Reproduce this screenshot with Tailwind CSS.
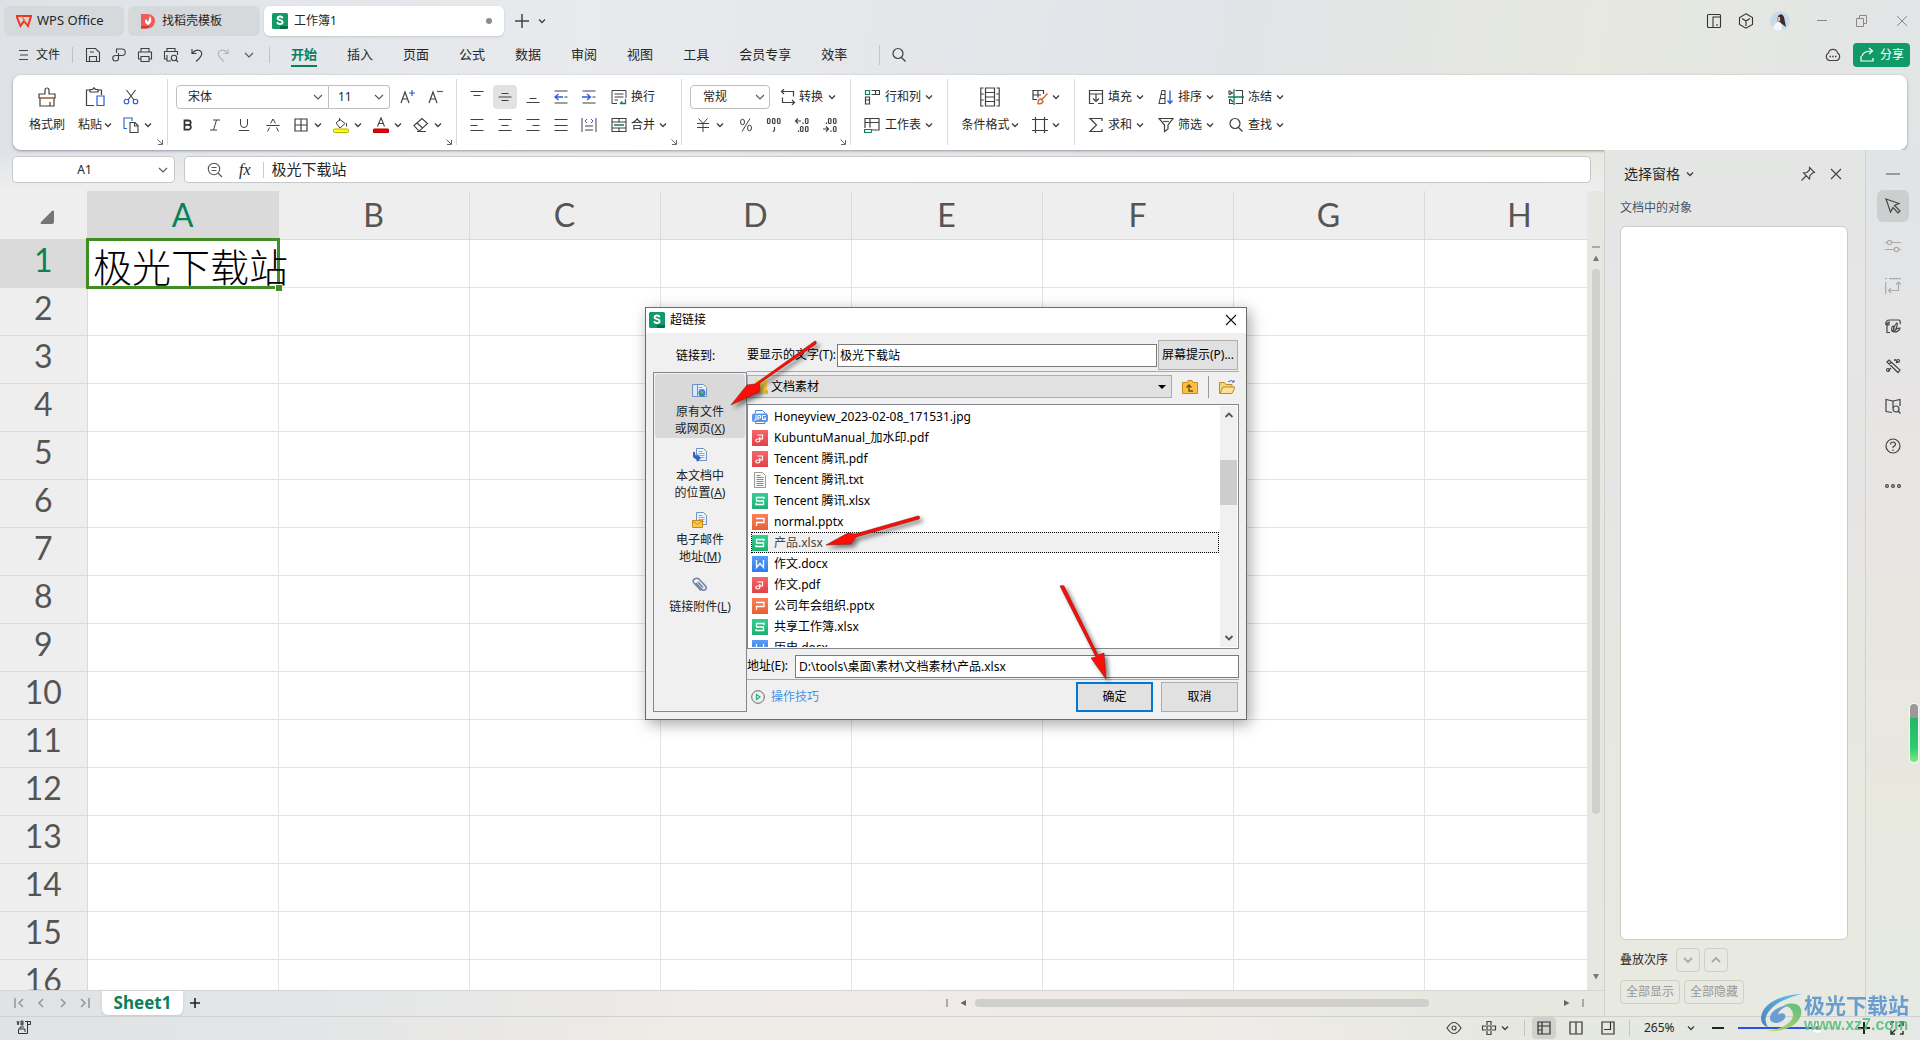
<!DOCTYPE html>
<html lang="zh-CN">
<head>
<meta charset="utf-8">
<meta name="viewport" content="width=device-width, initial-scale=1">
<title>工作簿1 - WPS Office</title>
<script src="https://cdn.jsdelivr.net/npm/@tailwindcss/browser@4"></script>
</head>
<body class="h-screen overflow-hidden flex flex-col font-['Noto_Sans','Noto_Sans_CJK_SC',sans-serif] text-xs text-[#262626] bg-[linear-gradient(100deg,#dee2e7_0%,#e8eaed_28%,#e1e4e8_58%,#e7e8e0_76%,#e2e5e6_92%,#e0e4e8_100%)]">

<!-- icon sprite -->
<svg class="absolute size-0" aria-hidden="true">
  <defs>
    <linearGradient id="gRed" x1="0" y1="0" x2="0" y2="1"><stop offset="0" stop-color="#f5666b"/><stop offset="1" stop-color="#e04348"/></linearGradient>
    <linearGradient id="gGreen" x1="0" y1="0" x2="0" y2="1"><stop offset="0" stop-color="#35cf92"/><stop offset="1" stop-color="#1daf72"/></linearGradient>
    <linearGradient id="gOrange" x1="0" y1="0" x2="0" y2="1"><stop offset="0" stop-color="#f98055"/><stop offset="1" stop-color="#e5603a"/></linearGradient>
    <linearGradient id="gBlue" x1="0" y1="0" x2="0" y2="1"><stop offset="0" stop-color="#5a9cf5"/><stop offset="1" stop-color="#2f7be8"/></linearGradient>
    <symbol id="chev" viewBox="0 0 8 8"><path d="M1 2.5l3 3 3-3" fill="none" stroke="#404040" stroke-width="1.4"/></symbol>
    <symbol id="chevL" viewBox="0 0 10 10"><path d="M1 3l4 4 4-4" fill="none" stroke="#555" stroke-width="1.1"/></symbol>
    <symbol id="launch" viewBox="0 0 6 6"><path d="M.5.5l4.500 4.500M5.500 1v4.500H1" fill="none" stroke="#666"/></symbol>
    <symbol id="s" viewBox="0 0 16 16"><rect width="16" height="16" rx="1.5" fill="#109a67"/><path d="M8 13h8v1.500q0 1.500-1.500 1.500H8z" fill="#0a6a45"/><path d="M10.600 5.200Q10.200 3.500 8 3.500T5.500 5.300Q5.500 6.700 8 7.200T10.600 9.200Q10.500 11 8 11T5.200 9.200" fill="none" stroke="#fff" stroke-width="1.800"/></symbol>
    <symbol id="pdf" viewBox="0 0 16 16"><rect width="16" height="16" fill="url(#gRed)"/><path d="M5.500 5h5v4H5.800q-2 0-2 1.500t2 1.500 2-1.500V7" fill="none" stroke="#fff" stroke-width="1.200"/></symbol>
    <symbol id="xls" viewBox="0 0 16 16"><rect width="16" height="16" fill="url(#gGreen)"/><path d="M12 6V4.500H4.500V8h7v3.500H4V10" fill="none" stroke="#fff" stroke-width="1.300"/></symbol>
    <symbol id="ppt" viewBox="0 0 16 16"><rect width="16" height="16" fill="url(#gOrange)"/><path d="M4 4.500h8v4H4.500V12" fill="none" stroke="#fff" stroke-width="1.300"/></symbol>
    <symbol id="doc" viewBox="0 0 16 16"><rect width="16" height="16" fill="url(#gBlue)"/><path d="M4.500 4v7.500L8 7.500l3.500 4V4" fill="none" stroke="#fff" stroke-width="1.300"/></symbol>
    <symbol id="txt" viewBox="0 0 16 16"><path d="M2.500.5h8l3 3v12h-11z" fill="#fafafa" stroke="#999"/><path d="M4.500 3.500h4m-4 2h7m-7 2h7m-7 2h7m-7 2h7m-7 2h7" stroke="#888"/></symbol>
    <symbol id="jpg" viewBox="0 0 16 16"><path d="M3.500 4V1.500h7L13 4v1m-9.500 8v1.500H13V13" fill="none" stroke="#4a86dc"/><rect y="4.500" width="16" height="8.500" rx="2" fill="#5a94e6"/><path d="M4 6v5H2m4 0V6.500h2.500v2.500H6m7.500-2.500h-3v4h3V9H12" fill="none" stroke="#fff"/></symbol>
    <symbol id="page" viewBox="0 0 16 16"><path d="M4.500.5h7l3 3v9h-10z" fill="#eef5ff" stroke="#6d8fc4"/><path d="M6.500 3.500h4m-4 2h6m-6 2h6m-6 2h6" stroke="#84a7dd"/></symbol>
    <symbol id="mag" viewBox="0 0 16 16"><circle cx="7" cy="6.500" r="5" fill="none" stroke="currentColor" stroke-width="1.200"/><path d="M10.500 10.500l4 4" stroke="currentColor" stroke-width="1.200"/></symbol>
  </defs>
</svg>

<!-- title bar -->
<header class="flex items-center h-9 mt-[3px] shrink-0 pl-1 pr-[10px] text-[13px]">
  <button class="flex items-center gap-[5px] w-30 h-[30px] rounded-md bg-[#d5d9dc] pl-3 mr-1 whitespace-nowrap">
    <svg class="size-4 shrink-0" viewBox="0 0 16 16"><path d="M.5 3h14.500l-3 10-4-5-3.500 5z" fill="none" stroke="#ee3524" stroke-width="2"/><path d="M6 3l3 6" stroke="#f6722e" stroke-width="1.500"/></svg>
    <span>WPS Office</span>
  </button>
  <button class="flex items-center gap-[6px] w-33 h-[30px] rounded-md bg-[#d5d9dc] pl-3 mr-1 text-xs">
    <svg class="size-4" viewBox="0 0 16 16"><path d="M1 1h6c5 0 8 3 8 7s-3 7.500-8 7.500H1z" fill="#ef5b5b"/><path d="M1 13h9l-3 2.500H1z" fill="#d33a3a"/><path d="M8 12C4 10 5 7 6 6l2 3 2-6c2 3 2 7-2 9z" fill="#fff"/></svg>
    找稻壳模板
  </button>
  <button class="flex items-center gap-[6px] w-60 h-[30px] rounded-md bg-white pl-2 pr-3 shadow text-xs">
    <svg class="size-4"><use href="#s"/></svg><span>工作簿1</span><span class="ml-auto size-[6px] rounded-full bg-[#8c8c8c]"></span>
  </button>
  <button class="flex items-center gap-2 ml-[10px]" aria-label="新建">
    <svg class="size-4" viewBox="0 0 16 16"><path d="M8 1v14M1 8h14" stroke="#444" stroke-width="1.500"/></svg>
    <svg class="size-2"><use href="#chev"/></svg>
  </button>
  <div class="ml-auto flex items-center gap-4">
    <svg class="size-4" viewBox="0 0 16 16" fill="none" stroke="#333" stroke-width="1.100"><rect x="1.500" y="1.500" width="13" height="13" rx="1"/><path d="M7 14.500V4h7.500M10 12h2"/></svg>
    <svg class="size-4" viewBox="0 0 16 16" fill="none" stroke="#333" stroke-width="1.100"><path d="M8 .8l6.500 3.700v7L8 15.200l-6.500-3.700v-7zM4 5.500L8 8l4-2.500M8 8v5"/></svg>
    <svg class="size-5" viewBox="0 0 20 20"><circle cx="10" cy="10" r="10" fill="#c9dbe6"/><path d="M8 5q4-4 6 1l2 10-4-3-5-3z" fill="#3b2a30"/><path d="M8 6q3-1 2 4l-3 1z" fill="#e8bda8"/><path d="M3 17q4-9 8-5l1 7q-5 2-9-2z" fill="#f3f7fa"/></svg>
  </div>
  <div class="flex items-center gap-6 ml-6">
    <button aria-label="最小化"><svg class="size-4" viewBox="0 0 16 16"><path d="M3 7.500h10" stroke="#888"/></svg></button>
    <button aria-label="还原"><svg class="size-4" viewBox="0 0 16 16" fill="none" stroke="#888"><path d="M2.500 5.500h7v8h-7zM5.500 5V2.500h7v8H10"/></svg></button>
    <button aria-label="关闭"><svg class="size-4" viewBox="0 0 16 16"><path d="M3 3l10 10M13 3L3 13" stroke="#888"/></svg></button>
  </div>
</header>

<!-- menu -->
<nav class="flex items-center h-8 mb-1 shrink-0 pl-[18px] pr-[10px] text-[13px]">
  <button class="flex items-center gap-[7px]"><svg class="w-[11px] h-3" viewBox="0 0 11 12"><path d="M1 1.500h9M2 6h8M1 10.500h9" stroke="#444"/></svg><span class="text-xs">文件</span></button>
  <span class="w-px h-4 bg-[#bfc3c6] ml-[12px] mr-[12px]"></span>
  <div class="flex items-center gap-[10px] text-[#404040]">
    <svg class="size-4" viewBox="0 0 16 16" fill="none" stroke="currentColor" stroke-width="1.100"><path d="M1.500 1.500h9l4 4v9h-13zM4.500 14V9.500h7V14M5 5h4"/></svg>
    <svg class="size-4" viewBox="0 0 16 16" fill="none" stroke="currentColor" stroke-width="1.100"><path d="M5.500 6V2h5.500a3 3 0 010 6.500H4.500a2.700 2.700 0 100 5.500c2 0 3-1 3-2.500V6"/></svg>
    <svg class="size-4" viewBox="0 0 16 16" fill="none" stroke="currentColor" stroke-width="1.100"><path d="M4 5V1.500h8V5M4 12H1.500V5h13v7H12M4 9.500h8v5H4z"/></svg>
    <svg class="size-4" viewBox="0 0 16 16" fill="none" stroke="currentColor" stroke-width="1.100"><path d="M4 4.500V1.500h8v3M3.500 12H1.500V4.500h13V8M4 8v6h4"/><circle cx="11" cy="11" r="2.700"/><path d="M13 13l2 2"/></svg>
    <svg class="size-4" viewBox="0 0 16 16" fill="none" stroke="currentColor" stroke-width="1.200"><path d="M3 2v4.500h4.500M3.500 6C8 .5 15 4 12 9c-1 2-3 4-5 5.500"/></svg>
    <svg class="size-4 text-[#b8b8b8]" viewBox="0 0 16 16" fill="none" stroke="currentColor" stroke-width="1.200"><path d="M13 2v4.500H8.500M12.500 6C8 .5 1 4 4 9c1 2 3 4 5 5.500"/></svg>
    <svg class="size-[10px] ml-[3px]"><use href="#chevL"/></svg>
  </div>
  <span class="w-px h-4 bg-[#bfc3c6] mx-[15px]"></span>
  <div class="flex items-center gap-[30px] ml-[6px]">
    <a href="#" class="relative font-bold text-[#0a7f58] after:absolute after:inset-x-0 after:-bottom-[3px] after:h-[2px] after:bg-[#0a7f58]">开始</a>
    <a href="#">插入</a><a href="#">页面</a><a href="#">公式</a><a href="#">数据</a><a href="#">审阅</a><a href="#">视图</a><a href="#">工具</a><a href="#">会员专享</a><a href="#">效率</a>
  </div>
  <span class="w-px h-5 bg-[#c4c7ca] ml-[32px] mr-[11px]"></span>
  <svg class="size-4 text-[#404040]"><use href="#mag"/></svg>
  <svg class="size-4 ml-auto mr-3" viewBox="0 0 16 16" fill="none" stroke="#444" stroke-width="1.100"><path d="M4.500 13.500a4 4 0 01-1-7.500 4.600 4.600 0 019 0 4 4 0 01-1 7.500z"/><path d="M4.500 9.500h1.500m1.200 0h1.500m1.300 0h1.500" stroke-width="1.600"/></svg>
  <button class="flex items-center gap-[5px] h-6 px-[6px] rounded bg-[#109a67] text-white text-xs"><svg class="size-4" viewBox="0 0 16 16" fill="none" stroke="#fff" stroke-width="1.200"><path d="M2 9v5h12v-3M3 9c1-4 4-5 10-5M10 1l3.500 3L10 7"/></svg>分享</button>
</nav>

<!-- ribbon -->
<section class="flex items-start shrink-0 h-[75px] ml-[13px] mr-[13px] pt-1 rounded-lg bg-white shadow-[0_1px_3px_rgba(0,0,0,0.35)] whitespace-nowrap" aria-label="开始">
  <div class="relative flex w-[155px] h-[66px] border-r border-[#dadada] pl-[11px] pt-1 shrink-0">
    <button class="flex flex-col items-center w-[46px]">
      <span class="h-7 flex items-center"><svg class="size-5" viewBox="0 0 20 20" fill="none" stroke="#404040" stroke-width="1.200"><path d="M8 7V3a2 2 0 014 0v4h6v4H2V7zM3 11v8h14v-8M13 19v-4"/><path d="M3 11h14" stroke="#d5692c"/></svg></span>
      <span class="h-7 flex items-center">格式刷</span>
    </button>
    <button class="flex flex-col items-center w-[50px]">
      <span class="h-7 flex items-center"><svg class="size-5" viewBox="0 0 20 20" fill="none" stroke="#404040" stroke-width="1.200"><path d="M9 18.500H1.500V3H5m8 0h3.500v5M5 5V2.500h2.500L9 .8l1.500 1.700H13V5z"/><path d="M12 9h7v9.500h-7z" stroke="#2a5bd7"/></svg></span>
      <span class="h-7 flex items-center gap-[2px]">粘贴<svg class="size-2"><use href="#chev"/></svg></span>
    </button>
    <div class="flex flex-col pl-[3px]">
      <button class="h-7 flex items-center" aria-label="剪切"><svg class="size-4" viewBox="0 0 16 16" fill="none" stroke="#404040" stroke-width="1.100"><path d="M3.500 1l7.500 10M12.500 1L5 11"/><g stroke="#2a5bd7"><circle cx="3.500" cy="12.500" r="2.300"/><circle cx="12.500" cy="12.500" r="2.300"/></g></svg></button>
      <button class="h-7 flex items-center gap-[5px]" aria-label="复制"><svg class="size-4" viewBox="0 0 16 16" fill="none" stroke="#404040" stroke-width="1.100"><path d="M4 11.500H1V1h8v3" stroke="#2a5bd7"/><path d="M7 5.500h5l3 3v7H7zM11.500 6v3H15"/></svg><svg class="size-2"><use href="#chev"/></svg></button>
    </div>
    <svg class="absolute right-[4px] bottom-0 size-[6px]"><use href="#launch"/></svg>
  </div>

  <div class="relative w-[289px] h-[66px] border-r border-[#dadada] pl-2 pt-1 shrink-0">
    <div class="h-7 flex items-center">
      <label class="relative flex items-center w-[153px] h-6 border border-[#bfbfbf] rounded-l"><select aria-label="字体" class="appearance-none w-full h-full pl-[11px] outline-none"><option>宋体</option></select><svg class="absolute right-[5px] size-[10px] pointer-events-none"><use href="#chevL"/></svg></label>
      <label class="relative flex items-center w-[61px] h-6 border border-l-0 border-[#bfbfbf] rounded-r"><select aria-label="字号" class="appearance-none w-full h-full pl-[9px] outline-none"><option>11</option></select><svg class="absolute right-[5px] size-[10px] pointer-events-none"><use href="#chevL"/></svg></label>
      <button class="w-9 flex justify-center" aria-label="增大字号"><svg class="size-4" viewBox="0 0 16 16" fill="none" stroke="#404040" stroke-width="1.200"><path d="M1 14L5 3l4 11M2.500 10h5"/><path d="M12 1v6M9 4h6" stroke="#2a5bd7"/></svg></button>
      <button class="w-5 flex justify-center" aria-label="减小字号"><svg class="size-4" viewBox="0 0 16 16" fill="none" stroke="#404040" stroke-width="1.200"><path d="M1 14L5 3l4 11M2.500 10h5"/><path d="M9 2.500h6" stroke="#2a5bd7"/></svg></button>
    </div>
    <div class="h-7 flex items-center">
      <button class="w-6 flex justify-center" aria-label="加粗"><svg class="size-3" viewBox="0 0 12 12" fill="none" stroke="#333" stroke-width="1.800"><path d="M2.500 1.500h4a2.200 2.200 0 010 4.400h-4zm0 4.400h4.500a2.400 2.400 0 010 4.700H2.500z"/></svg></button>
      <button class="w-[30px] flex justify-center" aria-label="倾斜"><svg class="size-3" viewBox="0 0 12 12" fill="none" stroke="#404040"><path d="M4 1h7M1 11h7M7.500 1l-3 10"/></svg></button>
      <button class="w-7 flex justify-center" aria-label="下划线"><svg class="size-3" viewBox="0 0 12 12" fill="none" stroke="#404040"><path d="M2.500 0v5a3.500 3.500 0 007 0V0M1 11.500h10"/></svg></button>
      <button class="w-[30px] flex justify-center" aria-label="删除线"><svg class="size-4" viewBox="0 0 16 16" fill="none" stroke="#404040"><path d="M5.500 6.500L8 2l2.500 4.500M1.500 8.500h13M4.500 10.500l-2 4M11.500 10.500l2 4"/></svg></button>
      <button class="w-10 pl-[5px] gap-[5px] flex items-center" aria-label="边框"><svg class="size-4" viewBox="0 0 16 16" fill="none" stroke="#404040" stroke-width="1.200"><path d="M2 2h12v12H2zM8 2v12M2 8h12"/></svg><svg class="size-2"><use href="#chev"/></svg></button>
      <button class="w-10 pl-[5px] gap-[5px] flex items-center" aria-label="填充颜色"><svg class="size-4" viewBox="0 0 16 16" fill="none" stroke="#404040"><path d="M6.500 1v3M3 6l4-3.500 5 4-5 4.500zM13.500 6v3.500"/><rect x=".5" y="12" width="15" height="3.500" rx="1" fill="#ff0" stroke="#b5b500"/></svg><svg class="size-2"><use href="#chev"/></svg></button>
      <button class="w-10 pl-[5px] gap-[5px] flex items-center" aria-label="字体颜色"><svg class="size-4" viewBox="0 0 16 16" fill="none" stroke="#404040" stroke-width="1.100"><path d="M4.500 9.500L8 .8l3.500 8.700M6 6.500h4"/><rect x=".5" y="12" width="15" height="3.500" rx="1" fill="#f00000" stroke="#b80000"/></svg><svg class="size-2"><use href="#chev"/></svg></button>
      <button class="w-10 pl-[5px] gap-[5px] flex items-center" aria-label="清除"><svg class="size-4" viewBox="0 0 16 16" fill="none" stroke="#404040" stroke-width="1.100"><path d="M1 8.500l8-7 5.500 5-7.500 7-2-.5zM4 6l5.500 5M4 14.500h9"/></svg><svg class="size-2"><use href="#chev"/></svg></button>
    </div>
    <svg class="absolute right-[4px] bottom-0 size-[6px]"><use href="#launch"/></svg>
  </div>

  <div class="relative w-[225px] h-[66px] border-r border-[#dadada] pl-[6px] pt-1 shrink-0">
    <div class="h-7 flex items-center">
      <button class="w-7 flex justify-center" aria-label="顶端对齐"><svg class="size-4" viewBox="0 0 16 16" stroke="#404040"><path d="M1.500 2.500h13M4.500 6.500h7"/></svg></button>
      <button class="w-7 flex justify-center" aria-label="垂直居中"><span class="w-6 h-6 rounded bg-[#e2e2e2] flex items-center justify-center"><svg class="size-4" viewBox="0 0 16 16" stroke="#404040"><path d="M4.500 4.500h7M1.500 8h13M4.500 11.500h7"/></svg></span></button>
      <button class="w-7 flex justify-center" aria-label="底端对齐"><svg class="size-4" viewBox="0 0 16 16" stroke="#404040"><path d="M4.500 9.500h7M1.500 13.500h13"/></svg></button>
      <button class="w-7 flex justify-center" aria-label="减少缩进"><svg class="size-4" viewBox="0 0 16 16" fill="none" stroke="#404040"><path d="M1.500 2h13M1.500 14h13M11.500 8h3"/><path d="M10 8H2m3.500-3L2 8l3.500 3" stroke="#2a5bd7" stroke-width="1.300"/></svg></button>
      <button class="w-7 flex justify-center" aria-label="增加缩进"><svg class="size-4" viewBox="0 0 16 16" fill="none" stroke="#404040"><path d="M1.500 2h13M1.500 14h13M11.500 8h3"/><path d="M1 8h8M6 5l3.500 3L6 11" stroke="#2a5bd7" stroke-width="1.300"/></svg></button>
      <button class="flex items-center pl-2 gap-1"><svg class="size-4" viewBox="0 0 16 16" fill="none" stroke="#404040"><path d="M6 14.500H1V1.500h14V9M3.500 5h9m-9 3h9m-9 3H7"/><path d="M14.500 10v4.500H9m2.500-2L9 14.500" stroke="#0a7f58" stroke-width="1.300"/></svg>换行</button>
    </div>
    <div class="h-7 flex items-center">
      <button class="w-7 flex justify-center" aria-label="左对齐"><svg class="size-4" viewBox="0 0 16 16" stroke="#404040"><path d="M1.500 2.500h13M1.500 8.500h7M1.500 13.500h13"/></svg></button>
      <button class="w-7 flex justify-center" aria-label="居中"><svg class="size-4" viewBox="0 0 16 16" stroke="#404040"><path d="M1.500 2.500h13M4.500 8.500h7M1.500 13.500h13"/></svg></button>
      <button class="w-7 flex justify-center" aria-label="右对齐"><svg class="size-4" viewBox="0 0 16 16" stroke="#404040"><path d="M1.500 2.500h13M7.500 8.500h7M1.500 13.500h13"/></svg></button>
      <button class="w-7 flex justify-center" aria-label="两端对齐"><svg class="size-4" viewBox="0 0 16 16" stroke="#404040"><path d="M1.500 2.500h13M1.500 8.500h13M1.500 13.500h13"/></svg></button>
      <button class="w-7 flex justify-center" aria-label="分散对齐"><svg class="size-4" viewBox="0 0 16 16" fill="none" stroke="#404040"><path d="M1 1v14M15 1v14M4 9h8M4 13h8"/><path d="M6 2L4 4l2 2M10 2l2 2-2 2" stroke="#2a5bd7"/></svg></button>
      <button class="flex items-center pl-2 gap-1"><svg class="size-4" viewBox="0 0 16 16" fill="none" stroke="#404040" stroke-width="1.100"><path d="M1 1.500h14v13H1zM1 5h14M8 1.500V5M1 11h14M8 11v3.500"/><path d="M3 8h10" stroke="#0a7f58" stroke-width="1.500"/></svg>合并<svg class="size-2"><use href="#chev"/></svg></button>
    </div>
    <svg class="absolute right-[4px] bottom-0 size-[6px]"><use href="#launch"/></svg>
  </div>

  <div class="relative w-[169px] h-[66px] border-r border-[#dadada] pl-2 pt-1 shrink-0">
    <div class="h-7 flex items-center">
      <label class="relative flex items-center w-20 h-6 border border-[#bfbfbf] rounded"><select aria-label="数字格式" class="appearance-none w-full h-full pl-3 outline-none"><option>常规</option></select><svg class="absolute right-[4px] size-[10px] pointer-events-none"><use href="#chevL"/></svg></label>
      <button class="flex items-center pl-[10px] gap-[3px]"><svg class="size-4" viewBox="0 0 16 16" fill="none" stroke="#404040" stroke-width="1.200"><path d="M4 0L1.500 2.500 4 5M1.500 2.500h12v5M12 16l2.500-2.500L12 11M14.500 13.500h-12v-5"/></svg>转换<svg class="size-2 ml-[2px]"><use href="#chev"/></svg></button>
    </div>
    <div class="h-7 flex items-center">
      <button class="w-[42px] pl-[5px] gap-[5px] flex items-center" aria-label="货币"><svg class="size-4" viewBox="0 0 16 16" fill="none" stroke="#404040"><path d="M3.500 1.500L8 6.500l4.500-5M2 6.500h12M2 10.500h12M8 6.500V15"/></svg><svg class="size-2"><use href="#chev"/></svg></button>
      <button class="w-7 flex justify-center" aria-label="百分比"><svg class="size-4" viewBox="0 0 16 16" fill="none" stroke="#404040"><ellipse cx="4.500" cy="5" rx="2" ry="2.800"/><ellipse cx="11.500" cy="11" rx="2" ry="2.800"/><path d="M12 1.500L4 14.500"/></svg></button>
      <button class="w-7 flex justify-center" aria-label="千位分隔"><svg class="size-4" viewBox="0 0 16 16" fill="none" stroke="#404040" stroke-width="1.200"><rect x="1.500" y="1.500" width="2.500" height="5" rx="1"/><rect x="6.500" y="1.500" width="2.500" height="5" rx="1"/><rect x="11.500" y="1.500" width="2.500" height="5" rx="1"/><path d="M8.500 10v3L7 15"/></svg></button>
      <button class="w-7 flex justify-center" aria-label="增加小数"><svg class="size-4" viewBox="0 0 16 16" fill="none" stroke="#404040" stroke-width="1.200"><path d="M7 4H1.500M4 1.500L1.500 4 4 6.500M4.500 13.500v1.500M9 5.500V7"/><rect x="11.500" y="1.500" width="2.500" height="5" rx="1"/><rect x="11.500" y="9.500" width="2.500" height="5" rx="1"/><rect x="6.500" y="9.500" width="2.500" height="5" rx="1"/></svg></button>
      <button class="w-7 flex justify-center" aria-label="减少小数"><svg class="size-4" viewBox="0 0 16 16" fill="none" stroke="#404040" stroke-width="1.200"><path d="M1 12h5.500M4 9.500L6.500 12 4 14.500M4.500 5.500V7M9 13.500V15"/><rect x="11.500" y="1.500" width="2.500" height="5" rx="1"/><rect x="11.500" y="9.500" width="2.500" height="5" rx="1"/><rect x="6.500" y="1.500" width="2.500" height="5" rx="1"/></svg></button>
    </div>
    <svg class="absolute right-[4px] bottom-0 size-[6px]"><use href="#launch"/></svg>
  </div>

  <div class="w-[97px] h-[66px] border-r border-[#dadada] pl-[13px] pt-1 shrink-0">
    <button class="h-7 flex items-center gap-1"><svg class="size-4 mr-px" viewBox="0 0 16 16" fill="none" stroke="#404040" stroke-width="1.200"><path d="M7.500 1.500h8v4h-8M11.500 1.500v4M1.500 8v7h4V8zM1.500 11h4"/><path d="M1.500 1.500h4v4h-4z" stroke="#0a7f58"/></svg>行和列<svg class="size-2"><use href="#chev"/></svg></button>
    <button class="h-7 flex items-center gap-1"><svg class="size-4 mr-px" viewBox="0 0 16 16" fill="none" stroke="#404040" stroke-width="1.200"><path d="M1 11V1.500h14v11.500H9M1 5.500h14M6 1.500v9"/><path d="M.6 12.500h7.500L7 15.500H.6z" stroke="#0a7f58"/></svg>工作表<svg class="size-2"><use href="#chev"/></svg></button>
  </div>

  <div class="flex w-[127px] h-[66px] border-r border-[#dadada] pl-[13px] pt-1 shrink-0">
    <button class="flex flex-col items-center w-[58px]">
      <span class="h-7 flex items-center"><svg class="size-5" viewBox="0 0 20 20" fill="none" stroke="#404040" stroke-width="1.200"><path d="M3.500 1H.8v18h2.700M16.500 1h2.700v18h-2.700M5.500 1h9v4.500h-9zM5.500 5.500v4.500h9M5.500 10v4.500h9V5.500M5.500 14.500V19h9v-4.500M.8 7h3M.8 13h3M16.200 7h3M16.200 13h3"/></svg></span>
      <span class="h-7 flex items-center gap-px">条件格式<svg class="size-2"><use href="#chev"/></svg></span>
    </button>
    <div class="flex flex-col pl-[13px]">
      <button class="h-7 flex items-center gap-1" aria-label="单元格样式"><svg class="size-4" viewBox="0 0 16 16" fill="none" stroke="#404040" stroke-width="1.200"><path d="M5 10.500H1V1.500h10.500V5M1 6h8M6 1.500v7"/><path d="M15.500 4.500L9.500 11M9 10q-3 0-3 4.500 4 1 5-2z" stroke="#d5692c" stroke-width="1.400"/></svg><svg class="size-2"><use href="#chev"/></svg></button>
      <button class="h-7 flex items-center gap-1" aria-label="单元格"><svg class="size-4" viewBox="0 0 16 16" fill="none" stroke="#404040" stroke-width="1.200"><path d="M3.500 0v16M12.500 0v16M0 2.500h16M0 13.500h16"/></svg><svg class="size-2"><use href="#chev"/></svg></button>
    </div>
  </div>

  <div class="grid grid-cols-[70px_70px_70px] content-start h-[66px] pl-[13px] pt-1">
    <button class="h-7 flex items-center gap-1"><svg class="size-4" viewBox="0 0 16 16" fill="none" stroke="#404040" stroke-width="1.200"><path d="M6 14.500H1.500V5M10 14.500h4.500V5M1.500 1.500h13V5h-13zM8 5v7M5 9.500L8 12.500l3-3"/></svg>填充<svg class="size-2"><use href="#chev"/></svg></button>
    <button class="h-7 flex items-center gap-1"><svg class="size-4" viewBox="0 0 16 16" fill="none" stroke="#404040" stroke-width="1.100"><path d="M1 14.500L4 1.500h3v13zM2.500 9.500H7M3.500 5.500H7"/><path d="M12 1.500V14M9.500 11.500L12 14.500l2.500-3" stroke="#2a5bd7" stroke-width="1.300"/></svg>排序<svg class="size-2"><use href="#chev"/></svg></button>
    <button class="h-7 flex items-center gap-1"><svg class="size-4" viewBox="0 0 16 16" fill="none" stroke="#404040" stroke-width="1.100"><path d="M7.500 1.500h7v13h-7M1 1.500v4M1.500 6l3-3M1.500 1.500L4.500 5M1.500 10v4.500h4M2 10l3 3"/><path d="M0 8h16M6 0v16" stroke="#0a7f58" stroke-width="1.300"/></svg>冻结<svg class="size-2"><use href="#chev"/></svg></button>
    <button class="h-7 flex items-center gap-1"><svg class="size-4" viewBox="0 0 16 16" fill="none" stroke="#404040" stroke-width="1.200"><path d="M14 4V1.500H2L8.500 8 2 14.500h12V12"/></svg>求和<svg class="size-2"><use href="#chev"/></svg></button>
    <button class="h-7 flex items-center gap-1"><svg class="size-4" viewBox="0 0 16 16" fill="none" stroke="#404040" stroke-width="1.200"><path d="M1 1.500h14L10 8v4l-3.500 2.500V8z"/><path d="M5 4.500h6" stroke="#0a7f58"/></svg>筛选<svg class="size-2"><use href="#chev"/></svg></button>
    <button class="h-7 flex items-center gap-1"><svg class="size-4 text-[#404040]"><use href="#mag"/></svg>查找<svg class="size-2"><use href="#chev"/></svg></button>
  </div>
</section>

<!-- workspace -->
<div class="flex flex-1 min-h-0">
  <main class="flex flex-col flex-1 min-w-0">
    <div class="flex gap-[9px] h-[41px] shrink-0 pt-[6px] pb-2 pl-3 pr-[13px] bg-[linear-gradient(to_bottom,transparent,#eeeeee)]">
      <label class="relative flex items-center w-[163px] h-[27px] bg-white border border-[#c8c8c8] rounded"><input aria-label="名称框" value="A1" class="w-full h-full text-center outline-none pr-[18px]"><svg class="absolute right-[6px] size-[10px]"><use href="#chevL"/></svg></label>
      <div class="flex items-center flex-1 h-[27px] bg-white border border-[#c8c8c8] rounded pl-[22px]">
        <svg class="size-4" viewBox="0 0 16 16" fill="none" stroke="#555" stroke-width="1.100"><circle cx="7" cy="7" r="5.700"/><path d="M11 11l4 4M4.500 5.500h5M4.500 8.500h5"/></svg>
        <span class="ml-4 font-['Liberation_Serif',serif] italic text-base leading-4">fx</span>
        <span class="w-px h-4 bg-[#ccc] ml-[12px]"></span>
        <input aria-label="编辑栏" value="极光下载站" class="flex-1 h-full pl-2 pb-[3px] outline-none text-[15px]">
      </div>
    </div>
    <div class="flex flex-1 min-h-0">
      <div class="flex-1 min-w-0 overflow-hidden bg-white relative">
        <table class="table-fixed w-[1615px] border-collapse font-[Lato,sans-serif] text-[32px] leading-[46px] text-[#555]">
          <colgroup><col class="w-[87px]"><col class="w-[191px]" span="8"></colgroup>
          <thead><tr id="cols" class="h-12 bg-[#eeeeee]"><th class="border-b border-r border-[#d9d9d9] pl-10"><svg class="size-[14px] mt-1" viewBox="0 0 14 14"><path d="M14 1v11q0 2-2 2H1q-1-1 0-2L12 1q1-1 2 0z" fill="#757575"/></svg></th></tr></thead>
          <tbody id="rows"></tbody>
        </table>
        <div class="absolute left-[86px] top-[47px] w-[194px] h-[51px] border-[3px] border-[#3f8f22]">
          <span class="absolute left-[4px] top-0 whitespace-nowrap font-['Noto_Sans_CJK_SC',sans-serif] font-light text-[39px] leading-[48px] text-black">极光下载站</span>
          <span class="absolute -right-[5px] -bottom-[5px] size-[7px] bg-[#3f8f22] border-t border-l border-white"></span>
        </div>
      </div>
      <div class="flex flex-col items-center w-[17px] mt-12 pt-[7px] pb-[6px] bg-[#e6e7e0]">
        <span class="w-2 h-[2px] bg-[#aaa]"></span>
        <svg class="w-[6px] h-[6px] mt-[7px]" viewBox="0 0 6 6"><path d="M3 .5L6 6H0z" fill="#777"/></svg>
        <span class="w-2 flex-1 mt-2 mb-40 rounded bg-[#cfd0cb]"></span>
        <svg class="w-[6px] h-[6px] mb-1" viewBox="0 0 6 6"><path d="M3 5.500L6 0H0z" fill="#777"/></svg>
      </div>
    </div>
    <div class="flex items-start h-[26px] shrink-0 border-t border-[#d4d6d6] bg-[linear-gradient(to_right,#e0e3e6,#e3e6e7_20%,#efebe8_45%,#efeae7_70%,#e6e8e0_90%)]">
      <div class="flex items-center gap-3 h-6 pl-[14px] w-[102px]">
        <svg class="size-[10px]" viewBox="0 0 10 10" fill="none" stroke="#999" stroke-width="1.600"><path d="M1 0v10M9 1L5 5l4 4"/></svg>
        <svg class="size-[10px]" viewBox="0 0 10 10" fill="none" stroke="#999" stroke-width="1.600"><path d="M7 1L3 5l4 4"/></svg>
        <svg class="size-[10px]" viewBox="0 0 10 10" fill="none" stroke="#999" stroke-width="1.600"><path d="M3 1l4 4-4 4"/></svg>
        <svg class="size-[10px]" viewBox="0 0 10 10" fill="none" stroke="#999" stroke-width="1.600"><path d="M1 1l4 4-4 4M9 0v10"/></svg>
      </div>
      <button class="w-[81px] h-6 rounded-b-md bg-white text-[17px] leading-6 font-bold text-[#0a7f58] shadow-sm">Sheet1</button>
      <button class="h-6 px-[7px] flex items-center" aria-label="新建工作表"><svg class="size-[10px]" viewBox="0 0 10 10"><path d="M5 0v10M0 5h10" stroke="#222" stroke-width="1.600"/></svg></button>
      <div class="ml-auto flex items-center h-6 w-[658px] pr-[20px]">
        <span class="w-[2px] h-2 bg-[#aaa]"></span>
        <svg class="size-[6px] ml-[12px] mr-[9px]" viewBox="0 0 6 6"><path d="M.5 3L6 0v6z" fill="#666"/></svg>
        <span class="w-[454px] h-2 rounded bg-[#d1cfcb]"></span>
        <svg class="size-[6px] ml-auto mr-[12px]" viewBox="0 0 6 6"><path d="M5.500 3L0 0v6z" fill="#666"/></svg>
        <span class="w-[2px] h-2 bg-[#aaa]"></span>
      </div>
    </div>
  </main>

  <aside class="flex flex-col w-[261px] shrink-0 border-l border-[#cfd1d1] pt-[14px] px-[15px] bg-[linear-gradient(to_bottom,#e4e6e4,#e6e5e5_40%,#e7e8df_70%,#e8e9e1)]">
    <div class="flex items-center h-5 pl-1">
      <h2 class="flex items-center gap-[6px] text-sm">选择窗格<svg class="size-2"><use href="#chev"/></svg></h2>
      <svg class="size-4 ml-auto" viewBox="0 0 16 16" fill="none" stroke="#444" stroke-width="1.100"><path d="M9.500 1.500l5 5-2 .5-2.500 2.500-.5 3.500-6-6 3.500-.5L9.500 4zM6 10l-4.500 4.500"/></svg>
      <button class="ml-3 mr-[6px]" aria-label="关闭窗格"><svg class="size-4" viewBox="0 0 16 16"><path d="M3 3l10 10M13 3L3 13" stroke="#444" stroke-width="1.200"/></svg></button>
    </div>
    <p class="mt-[14px] leading-5 text-[#45546c]">文档中的对象</p>
    <div class="mt-2 mb-2 mr-[2px] flex-1 bg-white border border-[#cbccc8] rounded-md"></div>
    <div class="flex items-center h-6">
      <span class="mr-2">叠放次序</span>
      <button class="flex items-center justify-center size-6 border border-[#cfd0c9] rounded" aria-label="下移"><svg class="size-[10px]" viewBox="0 0 10 10"><path d="M1 3l4 4 4-4" fill="none" stroke="#aaa" stroke-width="1.800"/></svg></button>
      <button class="flex items-center justify-center size-6 border border-[#cfd0c9] rounded ml-1" aria-label="上移"><svg class="size-[10px]" viewBox="0 0 10 10"><path d="M1 7l4-4 4 4" fill="none" stroke="#aaa" stroke-width="1.800"/></svg></button>
    </div>
    <div class="flex gap-1 mt-2 mb-[12px] text-[#999]">
      <button class="h-6 w-[60px] border border-[#cfd0c9] rounded">全部显示</button>
      <button class="h-6 w-[60px] border border-[#cfd0c9] rounded">全部隐藏</button>
    </div>
  </aside>

  <aside class="relative flex flex-col items-center w-[55px] shrink-0 border-l border-[#cfd1d1] pr-px pt-[17px] text-[#444] bg-[linear-gradient(to_bottom,#e0e4e7,#e9e5e3_40%,#e8e8df_75%,#e6e8e4)]" aria-label="任务窗格">
    <span class="w-[14px] h-[2px] mt-[6px] bg-[#999]"></span>
    <button class="flex items-center justify-center w-8 h-8 mt-[15px] rounded-md bg-[#cdcfcf]" aria-label="选择"><svg class="size-4" viewBox="0 0 16 16" fill="none" stroke="currentColor" stroke-width="1.200"><path d="M1 1l13 4.500-4.500 2L15 13l-2 2-5-5.500L5.500 14z"/></svg></button>
    <div class="flex flex-col gap-6 mt-4">
      <svg class="size-4 text-[#aaa]" viewBox="0 0 16 16" fill="none" stroke="currentColor" stroke-width="1.200"><circle cx="4.500" cy="4.500" r="2.200"/><circle cx="11.500" cy="11.500" r="2.200"/><path d="M0 4.500h2M7 4.500h9M0 11.500h9M14 11.500h2"/></svg>
      <svg class="size-4 text-[#aaa]" viewBox="0 0 16 16" fill="none" stroke="currentColor" stroke-width="1.200"><path d="M.7 4v12M4 .7h12M0 .7h2M13.500 4v8.500H4M11 6.500L13.500 4 16 6.500M6 10l-2.500 2.500L6 15"/></svg>
      <svg class="size-4" viewBox="0 0 16 16" fill="none" stroke="currentColor" stroke-width="1.200"><path d="M5 14.500H2V8a3 3 0 013-4M1 7q-1-5 4-5h9q2 1 1 4M1 7h3V4M7 13q-1-4 1-5 2 2 0 5 2-7 4-8 1 4-3 9 2-4 6-4-1 4-6 4z"/></svg>
      <svg class="size-4" viewBox="0 0 16 16" fill="none" stroke="currentColor" stroke-width="1.200"><path d="M2 4l2-2 11 10-2 2.500zM6.500 4L4 6.500M11 5l2-2M3 13l3-3"/><circle cx="13" cy="3" r="1.500"/><circle cx="3" cy="12" r="1.500"/><circle cx="10" cy="2" r=".5"/></svg>
      <svg class="size-4" viewBox="0 0 16 16" fill="none" stroke="currentColor" stroke-width="1.200"><path d="M8 3v7M8 3L1 1.500v12l6 1M8 3l7-1.500V8"/><circle cx="11" cy="11" r="3"/><path d="M13 13l2.500 2.500"/></svg>
      <svg class="size-4" viewBox="0 0 16 16" fill="none" stroke="currentColor" stroke-width="1.200"><circle cx="8" cy="8" r="7"/><path d="M5.500 6.500a2.500 2.500 0 115 0q0 1-2.500 2.500V10M8 11.500V13"/></svg>
      <svg class="size-4" viewBox="0 0 16 16" fill="none" stroke="currentColor" stroke-width="1.200"><circle cx="2" cy="8" r="1.400"/><circle cx="8" cy="8" r="1.400"/><circle cx="14" cy="8" r="1.400"/></svg>
    </div>
    <span class="absolute right-[2px] top-[554px] w-2 h-[58px] rounded bg-[linear-gradient(to_bottom,#999_0,#999_14px,#1fb866_14px,#2ecc71_44px,#7fe87a_58px)] ring-1 ring-white/70"></span>
  </aside>
</div>

<!-- status bar -->
<footer class="relative flex items-center h-6 shrink-0 border-t border-[#cfd1d1] pl-4 pr-4 pb-px bg-[linear-gradient(to_right,#e0e3e6,#e3e5e6_15%,#efebe6_35%,#efebe8_65%,#e6e8e0_78%,#e5e8e4)]">
  <svg class="size-4" viewBox="0 0 16 16" fill="none" stroke="#333"><path d="M1 1l1 4 1-4M5 1v4h2V1zM5 3h2M9 1.500h5.500v3H12M11.500 2v11.500H2.500V9H9v3M4 9V7h4"/></svg>
  <div class="ml-auto flex items-center">
    <svg class="size-4" viewBox="0 0 16 16" fill="none" stroke="#444" stroke-width="1.200"><path d="M1 8q7-11 14 0-7 11-14 0z"/><circle cx="8" cy="8" r="2"/></svg>
    <svg class="size-4 ml-[19px]" viewBox="0 0 16 16" fill="none" stroke="#444" stroke-width="1.200"><path d="M6 5V1.500h4V5M6 11v3.500h4V11M5 6H1.500v4H5M11 6h3.500v4H11M6 6h4v4H6z"/></svg>
    <svg class="size-2 ml-[4px]"><use href="#chev"/></svg>
    <span class="w-px h-4 bg-[#c5c6c2] ml-[15px] mr-[7px]"></span>
    <button class="flex items-center justify-center w-6 h-[22px] rounded bg-[#d0d1cc]" aria-label="普通视图"><svg class="size-[14px]" viewBox="0 0 14 14" fill="none" stroke="#333" stroke-width="1.200"><path d="M1 1h12v12H1zM1 5h12M5 1v12M1 9h4"/></svg></button>
    <button class="ml-[13px]" aria-label="分页预览"><svg class="size-[14px]" viewBox="0 0 14 14" fill="none" stroke="#333" stroke-width="1.200"><path d="M1 1h12v12H1zM7 1v12"/></svg></button>
    <button class="ml-[18px]" aria-label="页面布局"><svg class="size-[14px]" viewBox="0 0 14 14" fill="none" stroke="#333" stroke-width="1.200"><path d="M1 1h12v12H1zM3 8.500h6.500V1"/></svg></button>
    <span class="w-px h-4 bg-[#c5c6c2] ml-[14px] mr-[14px]"></span>
    <span class="w-[34px]">265%</span>
    <svg class="size-2 ml-[9px]"><use href="#chev"/></svg>
    <button class="ml-[17px]" aria-label="缩小"><svg class="size-3" viewBox="0 0 12 12"><path d="M0 6h12" stroke="#222" stroke-width="2"/></svg></button>
    <div class="relative flex items-center w-[102px] ml-[14px] mr-[18px]">
      <span class="w-[79px] h-[2px] bg-[#2b50e8]"></span><span class="flex-1 h-[2px] bg-[#ccc]"></span>
      <span class="absolute left-[74px] size-[10px] rounded-full bg-[#888] border-[3px] border-white"></span>
    </div>
    <button aria-label="放大"><svg class="size-3" viewBox="0 0 12 12"><path d="M0 6h12M6 0v12" stroke="#222" stroke-width="2"/></svg></button>
    <svg class="size-[14px] ml-[20px]" viewBox="0 0 14 14" fill="none" stroke="#333" stroke-width="1.500"><path d="M9 1h4v4M13 1L8.500 5.500M5 13H1V9M1 13l4.500-4.500M1 4V1h3M13 10v3h-3"/></svg>
  </div>
  <!-- site mark -->
  <div class="absolute right-[11px] bottom-[7px] flex items-center pointer-events-none opacity-90">
    <svg class="w-11 h-10" viewBox="0 0 44 40"><defs><linearGradient id="wm1" x1="0" y1="1" x2="1" y2="0"><stop offset="0" stop-color="#3c78b8"/><stop offset="1" stop-color="#4fc0ee"/></linearGradient><linearGradient id="wm2" x1="0" y1="1" x2="1" y2="0"><stop offset="0" stop-color="#c8dc4a"/><stop offset="1" stop-color="#4db87a"/></linearGradient></defs><path d="M43 1C24 1 2 9 1 25c0 5 3 8 7 9-4-6-3-12 3-18C18 9 28 4 43 1z" fill="url(#wm1)"/><path d="M24 12c12-4 19 1 17 10C38 33 22 40 6 38c10-1 22-5 26-12 3-6-1-12-8-14z" fill="url(#wm2)"/><path d="M32 12C20 12 10 18 10 25c0 7 12 6 15 0 2-5-4-6-7-3 1-6 8-9 14-10z" fill="#5d97cf"/></svg>
    <div class="w-[105px]">
      <div class="text-[21px] leading-6 font-bold text-[#5b95cf] whitespace-nowrap">极光下载站</div>
      <div class="text-base leading-4 font-bold text-[#5dc07f] font-['Liberation_Sans',sans-serif]">www.xz7.com</div>
    </div>
  </div>
</footer>

<!-- hyperlink dialog -->
<div role="dialog" aria-label="超链接" class="absolute left-[645px] top-[307px] w-[602px] h-[413px] flex flex-col border border-[#6b6b6b] bg-[#f0f0f0] text-black shadow-[3px_4px_14px_rgba(0,0,0,0.35)]">
  <div class="flex items-center h-[25px] shrink-0 bg-white pl-[3px] pr-2 pb-px">
    <svg class="size-4 mr-[5px]"><use href="#s"/></svg>超链接
    <button class="ml-auto" aria-label="关闭"><svg class="size-[14px]" viewBox="0 0 14 14"><path d="M2 2l10 10M12 2L2 12" stroke="#111" stroke-width="1.100"/></svg></button>
  </div>
  <div class="flex flex-1 pl-[7px] pr-[7px] pb-[7px]">
    <div class="flex flex-col w-[94px] shrink-0">
      <div class="h-[39px] flex items-center pl-[23px] pt-[6px]">链接到:</div>
      <div class="flex-1 border border-[#828790] p-px text-center leading-[17px] text-[#222]">
        <button class="block w-full h-16 pt-2 rounded bg-[#d9d9d9]"><svg class="size-4 mx-auto mb-[3px]" viewBox="0 0 16 16"><use href="#page"/><path d="M.5.5h5v12h-5z" fill="#dce9fb" stroke="#6d8fc4"/><circle cx="10" cy="9" r="3.500" fill="#3a7bd0"/><path d="M8 8q2-3 4 0l-2 3z" fill="#5cb85c"/></svg>原有文件<br>或网页(<u>X</u>)</button>
        <button class="block w-full h-16 pt-2"><svg class="size-4 mx-auto mb-[3px]" viewBox="0 0 16 16"><use href="#page"/><path d="M1 4v4q0 3 4 3v3l4-4-4-4v2Q3 8 3 4z" fill="#2f66c4"/></svg>本文档中<br>的位置(<u>A</u>)</button>
        <button class="block w-full h-16 pt-2"><svg class="size-4 mx-auto mb-[3px]" viewBox="0 0 16 16"><use href="#page"/><path d="M.5 8.500h10v7H.5z" fill="#fbc94a" stroke="#c98a1b"/><path d="M.5 9l5 3.500 5-3.500" fill="none" stroke="#c98a1b"/></svg>电子邮件<br>地址(<u>M</u>)</button>
        <button class="block w-full pt-[11px]"><svg class="size-4 mx-auto mb-[5px]" viewBox="0 0 16 16" fill="none" stroke="#7287a3" stroke-width="1.600"><path d="M4 6l6 6.500q2 1.500 3.500 0t0-3.500L7 2Q5 .5 2.500 2T2 6l7 7.500M6 5l5 5.500"/></svg>链接附件(<u>L</u>)</button>
      </div>
    </div>
    <div class="flex flex-col flex-1 min-w-0">
      <div class="flex items-center h-[39px] pt-[6px] border-b border-[#a8a8a8]">
        <label for="disp" class="w-[90px] whitespace-nowrap">要显示的文字(T):</label>
        <input id="disp" value="极光下载站" class="flex-1 min-w-0 h-[23px] bg-white border border-[#7a7a7a] pl-[2px] outline-none">
        <button class="w-20 h-[30px] ml-px mr-px bg-[#e1e1e1] border border-[#adadad] whitespace-nowrap">屏幕提示(P)...</button>
      </div>
      <div class="flex items-center mt-[3px]">
        <label class="relative flex items-center w-[425px] h-[23px] border border-[#adadad] bg-[#e1e1e1]">
          <svg class="absolute left-[6px] size-[14px]" viewBox="0 0 14 14"><path d="M1 0h12v14H1z" fill="#f7d352"/><path d="M11 10h3v4h-3z" fill="#e3b52f"/></svg>
          <select aria-label="查找范围" class="appearance-none w-full h-full pl-[23px] outline-none"><option>文档素材</option></select>
          <svg class="absolute right-[5px] w-2 h-1 pointer-events-none" viewBox="0 0 8 4"><path d="M0 0h8L4 4z" fill="#000"/></svg>
        </label>
        <button class="ml-[10px]" aria-label="上一级"><svg class="size-4" viewBox="0 0 16 16"><path d="M.5 3.500H5l1-2h4l1 2h4.500v11H.5z" fill="#fbbf45" stroke="#c98a1b"/><path d="M11 12H7V6M4.500 8.500L7 6l2.500 2.500" fill="none" stroke="#7a4a00" stroke-width="1.300"/></svg></button>
        <span class="w-px h-[22px] bg-[#999] mx-[10px]"></span>
        <button aria-label="浏览文件"><svg class="size-4" viewBox="0 0 16 16"><path d="M.5 3.500h5l1.500 2h6v8.500H.5z" fill="#f4d67a" stroke="#b98a2c"/><path d="M1 14.500L4 8h12l-3 6.500z" fill="#fde39a" stroke="#b98a2c"/><path d="M9 3q3-3 6 0V1m0 2h-2" fill="none" stroke="#4b6ea8"/></svg></button>
      </div>
      <div class="flex h-[245px] mt-[6px] border border-[#828790] bg-white p-px">
        <ul class="flex-1 overflow-hidden pl-[2px] pr-[1px]">
          <li class="flex items-center h-[21px] gap-[6px] px-px"><svg class="size-4"><use href="#jpg"/></svg>Honeyview_2023-02-08_171531.jpg</li>
          <li class="flex items-center h-[21px] gap-[6px] px-px"><svg class="size-4"><use href="#pdf"/></svg>KubuntuManual_加水印.pdf</li>
          <li class="flex items-center h-[21px] gap-[6px] px-px"><svg class="size-4"><use href="#pdf"/></svg>Tencent 腾讯.pdf</li>
          <li class="flex items-center h-[21px] gap-[6px] px-px"><svg class="size-4"><use href="#txt"/></svg>Tencent 腾讯.txt</li>
          <li class="flex items-center h-[21px] gap-[6px] px-px"><svg class="size-4"><use href="#xls"/></svg>Tencent 腾讯.xlsx</li>
          <li class="flex items-center h-[21px] gap-[6px] px-px"><svg class="size-4"><use href="#ppt"/></svg>normal.pptx</li>
          <li class="flex items-center h-[21px] gap-[6px] border border-dotted border-black bg-[#f0f0f0] text-[#444]"><svg class="size-4"><use href="#xls"/></svg>产品.xlsx</li>
          <li class="flex items-center h-[21px] gap-[6px] px-px"><svg class="size-4"><use href="#doc"/></svg>作文.docx</li>
          <li class="flex items-center h-[21px] gap-[6px] px-px"><svg class="size-4"><use href="#pdf"/></svg>作文.pdf</li>
          <li class="flex items-center h-[21px] gap-[6px] px-px"><svg class="size-4"><use href="#ppt"/></svg>公司年会组织.pptx</li>
          <li class="flex items-center h-[21px] gap-[6px] px-px"><svg class="size-4"><use href="#xls"/></svg>共享工作簿.xlsx</li>
          <li class="flex items-center h-[21px] gap-[6px] px-px"><svg class="size-4"><use href="#doc"/></svg>历史.docx</li>
        </ul>
        <div class="flex flex-col items-center w-[17px] bg-[#f0f0f0] py-1">
          <svg class="size-[10px]" viewBox="0 0 10 10"><path d="M1.500 7L5 3.500 8.500 7" fill="none" stroke="#555" stroke-width="1.800"/></svg>
          <span class="w-full h-[45px] mt-[40px] mb-auto bg-[#cdcdcd]"></span>
          <svg class="size-[10px]" viewBox="0 0 10 10"><path d="M1.500 3L5 6.500 8.500 3" fill="none" stroke="#555" stroke-width="1.800"/></svg>
        </div>
      </div>
      <div class="flex items-center h-[31px] pt-[5px] pb-[1px] border-b border-[#a8a8a8]">
        <label for="addr" class="w-[48px] whitespace-nowrap">地址(E):</label>
        <input id="addr" value="D:\tools\桌面\素材\文档素材\产品.xlsx" class="flex-1 h-[23px] bg-white border border-[#7a7a7a] pl-[3px] outline-none">
      </div>
      <div class="flex items-center gap-2 mt-px h-[31px] pl-1 pr-px">
        <svg class="size-[14px]" viewBox="0 0 14 14" fill="none"><circle cx="7" cy="7" r="6.300" stroke="#666"/><path d="M5.500 4.500L9 7 5.500 9.500z" stroke="#1fb673" stroke-width="1.200"/></svg>
        <a href="#" class="-ml-[2px] text-[#4a90ea]">操作技巧</a>
        <button class="ml-auto w-[77px] h-[30px] bg-[#e1e1e1] border-2 border-[#0078d7]">确定</button>
        <button class="w-[77px] h-[30px] bg-[#e1e1e1] border border-[#adadad]">取消</button>
      </div>
    </div>
  </div>
  <svg class="absolute left-0 top-0 w-[600px] h-[412px] pointer-events-none drop-shadow-[3px_3px_2px_rgba(0,0,0,0.5)]" viewBox="0 0 600 412">
    <g stroke="#8b1a10" stroke-width=".6" fill="#fd0c08">
      <path d="M169 33q2 0 1 3L114 75l-1 9-28 13 16-20 8-1z"/>
      <path d="M272 208q3 0 1 3L210 229l-5 7-25 1 22-12 7 1z"/>
      <path d="M414 278q2-1 4 0l34 69 6-2 2 26-15-21 5-1z"/>
    </g>
  </svg>
</div>

<script>
  const letters = "ABCDEFGH";
  const cols = document.getElementById("cols");
  for (const c of letters) {
    const th = document.createElement("th");
    th.textContent = c;
    th.className = c === "A"
      ? "font-normal border-b border-r border-[#d9d9d9] bg-[#dadada] text-[#0a8259] p-0"
      : "font-normal border-b border-r border-[#d9d9d9] p-0";
    cols.appendChild(th);
  }
  const rows = document.getElementById("rows");
  for (let r = 1; r <= 16; r++) {
    const tr = document.createElement("tr");
    tr.className = "h-12";
    const th = document.createElement("th");
    th.scope = "row";
    th.textContent = r;
    th.className = r === 1
      ? "font-normal border-b border-r border-[#d9d9d9] bg-[#dadada] text-[#0a8259] p-0 pb-2 leading-[39px]"
      : "font-normal border-b border-r border-[#d9d9d9] bg-[#eeeeee] p-0 pb-2 leading-[39px]";
    tr.appendChild(th);
    for (let i = 0; i < 8; i++) {
      const td = document.createElement("td");
      td.className = "border-b border-r border-[#e4e4e4] p-0";
      tr.appendChild(td);
    }
    rows.appendChild(tr);
  }
</script>
</body>
</html>
